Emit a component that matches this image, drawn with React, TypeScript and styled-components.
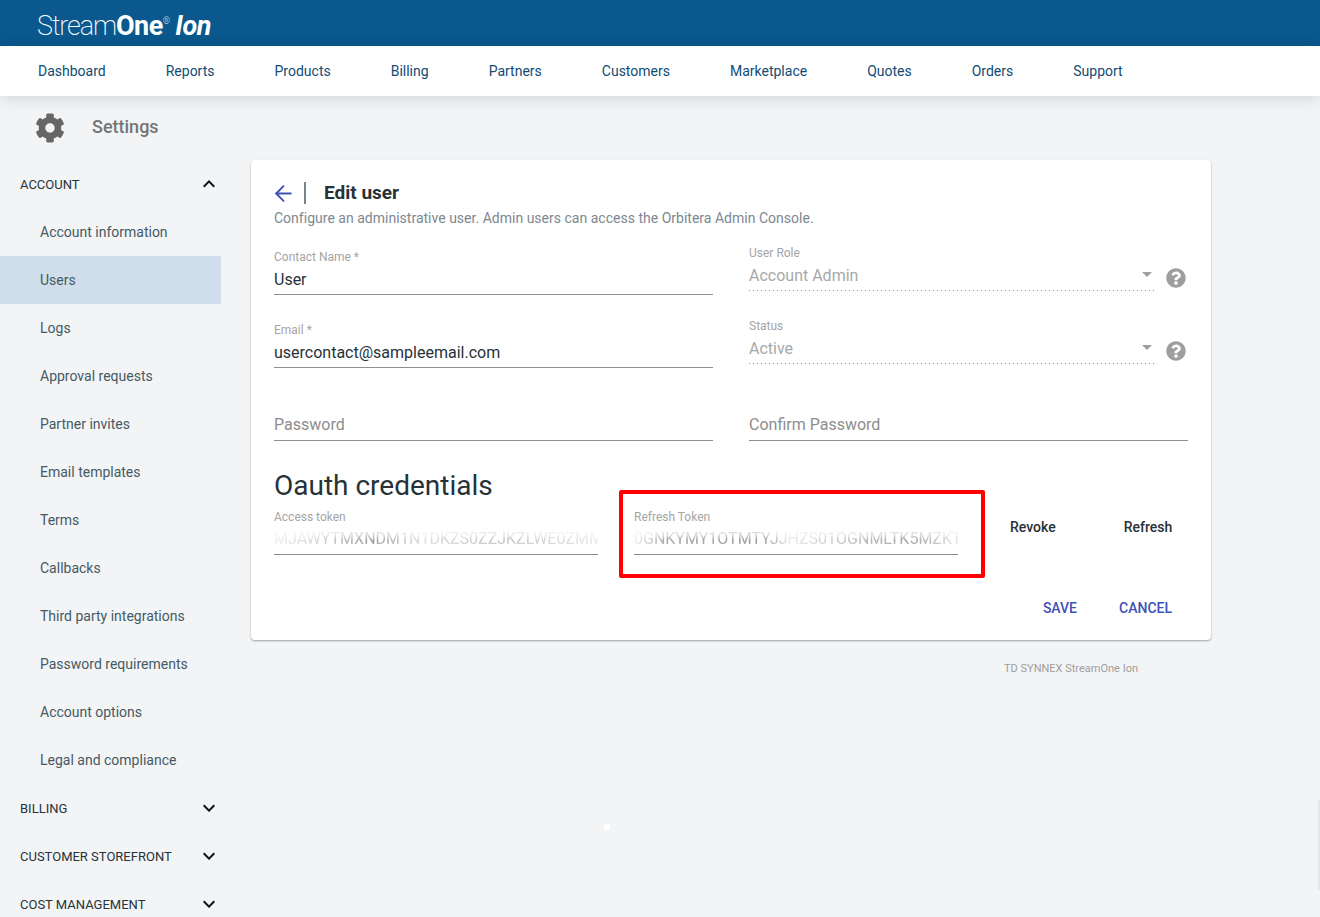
import React from 'react';
import styled, { createGlobalStyle } from 'styled-components';
import { FaCog, FaQuestionCircle } from 'react-icons/fa';
import { MdExpandLess, MdExpandMore, MdArrowDropDown } from 'react-icons/md';
import { ArrowLeft } from 'lucide-react';

const GlobalStyle = createGlobalStyle`
  html, body {
    margin: 0;
    padding: 0;
    height: 100%;
    overflow: hidden;
    background: #f3f4f6;
    font-family: Roboto, "Liberation Sans", sans-serif;
  }
`;

const Page = styled.div`
  position: relative;
  width: 1320px;
  height: 917px;
  overflow: hidden;
`;

const TopBar = styled.header`
  height: 46px;
  box-sizing: border-box;
  background: #0a588d;
  padding: 6px 0 0 37px;
  display: flex;
  align-items: center;
  color: #fff;
`;

const Logo = styled.div`
  font-size: 27px;
  line-height: 40px;
  font-weight: 200;
  letter-spacing: -1.1px;
  white-space: nowrap;
`;

const LogoBold = styled.b`
  font-weight: 700;
  letter-spacing: -0.5px;
`;

const LogoMark = styled.sup`
  font-size: 9px;
  line-height: 0;
  letter-spacing: 0;
  vertical-align: 11px;
`;

const LogoIon = styled.i`
  font-weight: 700;
  letter-spacing: -0.4px;
  margin-left: 5px;
`;

const Nav = styled.nav`
  position: relative;
  z-index: 2;
  height: 50px;
  background: #fff;
  padding-left: 38px;
  display: flex;
  align-items: center;
  gap: 60px;
  box-shadow: 0 2px 16px rgba(0, 0, 0, 0.14);
`;

const NavLink = styled.a`
  font-size: 14px;
  color: #0f4c75;
`;

const Body = styled.div`
  display: flex;
  align-items: flex-start;
`;

const Sidebar = styled.aside`
  width: 221px;
  flex: none;
`;

const SettingsHead = styled.div`
  height: 64px;
  display: flex;
  align-items: center;
  padding-left: 35px;
  gap: 27px;
  color: #666;
`;

const SettingsTitle = styled.span`
  padding-bottom: 4px;
  font-size: 18px;
  font-weight: 500;
  color: #757575;
`;

const GroupRow = styled.div`
  height: 48px;
  padding-left: 20px;
  display: flex;
  align-items: center;
  justify-content: space-between;
  font-size: 13px;
  color: #263238;
`;

const MenuItem = styled.div<{ $active?: boolean }>`
  height: 48px;
  padding-left: 40px;
  display: flex;
  align-items: center;
  font-size: 14px;
  color: #455a64;
  background: ${p => (p.$active ? '#d0deeb' : 'transparent')};
`;

const Main = styled.main`
  margin: 64px 0 0 30px;
  width: 960px;
`;

const Card = styled.section`
  height: 480px;
  box-sizing: border-box;
  background: #fff;
  border-radius: 4px;
  box-shadow: 0 1px 2px rgba(0, 0, 0, 0.35);
  padding: 22px 23px 0;
`;

const TitleRow = styled.div`
  display: flex;
  align-items: center;
  height: 22px;
  color: #3f51b5;
`;

const BackIcon = styled(ArrowLeft)`
  margin-left: -3px;
`;

const Divider = styled.span`
  width: 2px;
  height: 22px;
  margin: 0 18px 0 8px;
  background: #78848c;
`;

const CardTitle = styled.h2`
  margin: 0;
  font-size: 19px;
  line-height: 22px;
  font-weight: 700;
  color: #263238;
`;

const Subtitle = styled.p`
  margin: 4px 0 0;
  font-size: 14px;
  line-height: 20px;
  letter-spacing: 0.012px;
  color: #7d888f;
`;

const FormGrid = styled.div`
  display: grid;
  grid-template-columns: 439px 439px;
  column-gap: 36px;
  margin-top: 14px;
`;

const Column = styled.div<{ $top: number }>`
  padding-top: ${p => p.$top}px;
  display: flex;
  flex-direction: column;
  gap: 24px;
`;

const Field = styled.div`
  height: 49px;
  display: flex;
  flex-direction: column;
  justify-content: flex-end;
`;

const ConfirmField = styled(Field)`
  margin-top: 4px;
`;

const SelectWrap = styled.div`
  display: flex;
  align-items: flex-end;
  justify-content: space-between;
`;

const SelectField = styled(Field)`
  width: 405px;
`;

const HelpIcon = styled.span`
  display: flex;
  color: #9e9e9e;
  margin: 0 2px 3px 0;
`;

const Label = styled.label`
  font-size: 12px;
  line-height: 16px;
  color: #a5a5a5;
`;

const Value = styled.div<{ $muted?: boolean }>`
  height: 30px;
  line-height: 24px;
  padding-top: ${p => (p.$muted ? 2 : 3)}px;
  box-sizing: border-box;
  font-size: 16px;
  color: ${p => (p.$muted ? '#8d8d8d' : '#263238')};
  border-bottom: 1px solid #8f8f8f;
  display: flex;
  justify-content: space-between;
`;

const SelectValue = styled(Value)`
  color: #a8a8a8;
  border-bottom: 0;
  background: linear-gradient(90deg, #8f8f8f 1px, transparent 1px) left bottom / 4px 1px repeat-x;
`;

const Caret = styled.span`
  display: flex;
  color: #9e9e9e;
  margin: -2px -5px 0 0;
`;

const SectionTitle = styled.h3`
  margin: 27px 0 0;
  font-size: 28px;
  line-height: 36px;
  font-weight: 400;
  color: #263238;
`;

const OauthRow = styled.div`
  position: relative;
  display: flex;
  margin-top: 2px;
`;

const TokenField = styled.div<{ $width: number; $left?: number }>`
  width: ${p => p.$width}px;
  margin-left: ${p => p.$left || 0}px;
  flex: none;
`;

const TokenValue = styled.div`
  height: 30px;
  box-sizing: border-box;
  border-bottom: 1px solid #8f8f8f;
  font-size: 16px;
  line-height: 28px;
  color: #8a8a8a;
  white-space: nowrap;
  overflow: hidden;
`;

const TokenText = styled.span<{ $fade: string }>`
  display: block;
  -webkit-mask-image: linear-gradient(90deg, ${p => p.$fade}), linear-gradient(180deg, rgba(0, 0, 0, 0.35) 35%, #000 55%, rgba(0, 0, 0, 0.7) 75%);
  mask-image: linear-gradient(90deg, ${p => p.$fade}), linear-gradient(180deg, rgba(0, 0, 0, 0.35) 35%, #000 55%, rgba(0, 0, 0, 0.7) 75%);
  -webkit-mask-composite: source-in;
  mask-composite: intersect;
`;

const Highlight = styled.div`
  position: absolute;
  left: 345px;
  top: -16px;
  width: 366px;
  height: 88px;
  box-sizing: border-box;
  border: 4px solid #ff0000;
  border-radius: 2px;
`;

const TextButton = styled.button<{ $left: number }>`
  border: 0;
  padding: 0;
  margin: 11px 0 0 ${p => p.$left}px;
  height: 20px;
  background: none;
  font: 500 14px/20px Roboto, "Liberation Sans", sans-serif;
  color: #263238;
`;

const Actions = styled.div`
  display: flex;
  justify-content: flex-end;
  gap: 42px;
  margin-top: 43px;
  padding-right: 16px;
`;

const ActionButton = styled.button`
  border: 0;
  padding: 0;
  background: none;
  font: 500 14px/20px Roboto, "Liberation Sans", sans-serif;
  color: #3f51b5;
`;

const Footer = styled.div`
  margin: 22px 0 0 753px;
  font-size: 11px;
  line-height: 14px;
  color: #9e9e9e;
`;

const Dot = styled.span`
  position: absolute;
  left: 604px;
  top: 824px;
  width: 6px;
  height: 6px;
  background: #fff;
`;

const EdgeShade = styled.span`
  position: absolute;
  right: 0;
  top: 800px;
  width: 2px;
  height: 90px;
  background: #e4e5e7;
`;

const navItems = ['Dashboard', 'Reports', 'Products', 'Billing', 'Partners', 'Customers', 'Marketplace', 'Quotes', 'Orders', 'Support'];

const accountItems = [
  'Account information',
  'Users',
  'Logs',
  'Approval requests',
  'Partner invites',
  'Email templates',
  'Terms',
  'Callbacks',
  'Third party integrations',
  'Password requirements',
  'Account options',
  'Legal and compliance',
];

const accessFade = 'rgba(0,0,0,.15), rgba(0,0,0,.35) 12%, rgba(0,0,0,.9) 30%, rgba(0,0,0,.3) 45%, rgba(0,0,0,.55) 70%, rgba(0,0,0,.2)';
const refreshFade = 'rgba(0,0,0,.15), rgba(0,0,0,.8) 10%, rgba(0,0,0,.9) 40%, rgba(0,0,0,.2) 48%, rgba(0,0,0,.45) 60%, rgba(0,0,0,.85) 85%, rgba(0,0,0,.25)';

const App: React.FC = () => {
  return (
    <Page>
      <GlobalStyle />
      <TopBar>
        <Logo>
          Stream<LogoBold>One</LogoBold>
          <LogoMark>®</LogoMark>
          <LogoIon>Ion</LogoIon>
        </Logo>
      </TopBar>
      <Nav>
        {navItems.map(item => (
          <NavLink key={item}>{item}</NavLink>
        ))}
      </Nav>
      <Body>
        <Sidebar>
          <SettingsHead>
            <FaCog size={30} />
            <SettingsTitle>Settings</SettingsTitle>
          </SettingsHead>
          <GroupRow>
            ACCOUNT
            <MdExpandLess size={24} color='#111' />
          </GroupRow>
          {accountItems.map(item => (
            <MenuItem key={item} $active={item === 'Users'}>
              {item}
            </MenuItem>
          ))}
          <GroupRow>
            BILLING
            <MdExpandMore size={24} color='#111' />
          </GroupRow>
          <GroupRow>
            CUSTOMER STOREFRONT
            <MdExpandMore size={24} color='#111' />
          </GroupRow>
          <GroupRow>
            COST MANAGEMENT
            <MdExpandMore size={24} color='#111' />
          </GroupRow>
        </Sidebar>
        <Main>
          <Card>
            <TitleRow>
              <BackIcon size={25} strokeWidth={1.8} />
              <Divider />
              <CardTitle>Edit user</CardTitle>
            </TitleRow>
            <Subtitle>Configure an administrative user. Admin users can access the Orbitera Admin Console.</Subtitle>
            <FormGrid>
              <Column $top={4}>
                <Field>
                  <Label>Contact Name *</Label>
                  <Value>User</Value>
                </Field>
                <Field>
                  <Label>Email *</Label>
                  <Value>usercontact@sampleemail.com</Value>
                </Field>
                <Field>
                  <Value $muted>Password</Value>
                </Field>
              </Column>
              <Column $top={0}>
                <SelectWrap>
                  <SelectField>
                    <Label>User Role</Label>
                    <SelectValue>
                      Account Admin
                      <Caret>
                        <MdArrowDropDown size={24} />
                      </Caret>
                    </SelectValue>
                  </SelectField>
                  <HelpIcon>
                    <FaQuestionCircle size={20} />
                  </HelpIcon>
                </SelectWrap>
                <SelectWrap>
                  <SelectField>
                    <Label>Status</Label>
                    <SelectValue>
                      Active
                      <Caret>
                        <MdArrowDropDown size={24} />
                      </Caret>
                    </SelectValue>
                  </SelectField>
                  <HelpIcon>
                    <FaQuestionCircle size={20} />
                  </HelpIcon>
                </SelectWrap>
                <ConfirmField>
                  <Value $muted>Confirm Password</Value>
                </ConfirmField>
              </Column>
            </FormGrid>
            <SectionTitle>Oauth credentials</SectionTitle>
            <OauthRow>
              <TokenField $width={324}>
                <Label>Access token</Label>
                <TokenValue>
                  <TokenText $fade={accessFade}>MJAWYTMXNDM1N1DKZS0ZZJKZLWE0ZMM</TokenText>
                </TokenValue>
              </TokenField>
              <TokenField $width={324} $left={36}>
                <Label>Refresh Token</Label>
                <TokenValue>
                  <TokenText $fade={refreshFade}>0GNKYMY1OTMTYJJHZS01OGNMLTK5MZKT</TokenText>
                </TokenValue>
              </TokenField>
              <Highlight />
              <TextButton $left={52}>Revoke</TextButton>
              <TextButton $left={68}>Refresh</TextButton>
            </OauthRow>
            <Actions>
              <ActionButton>SAVE</ActionButton>
              <ActionButton>CANCEL</ActionButton>
            </Actions>
          </Card>
          <Footer>TD SYNNEX StreamOne Ion</Footer>
        </Main>
      </Body>
      <Dot />
      <EdgeShade />
    </Page>
  );
};

export default App;
